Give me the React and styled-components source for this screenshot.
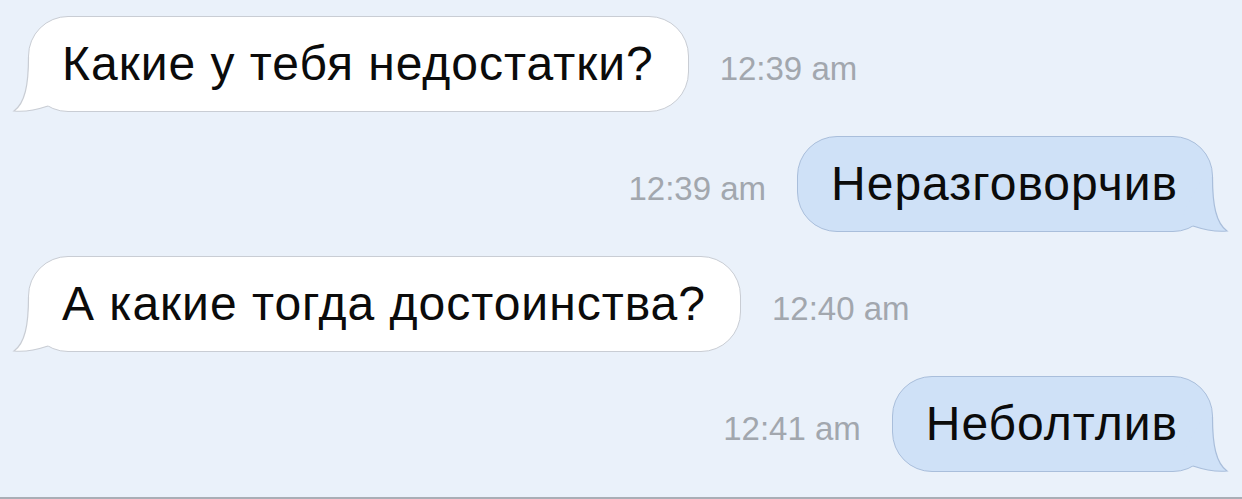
import React from "react";
import styled, { createGlobalStyle } from "styled-components";

const GlobalStyle = createGlobalStyle`
  html, body {
    margin: 0;
    padding: 0;
    background: #eaf1fa;
    font-family: "Liberation Sans", Arial, sans-serif;
  }
`;

const messages = [
  { text: "Какие у тебя недостатки?", time: "12:39 am", mine: false },
  { text: "Неразговорчив", time: "12:39 am", mine: true },
  { text: "А какие тогда достоинства?", time: "12:40 am", mine: false },
  { text: "Неболтлив", time: "12:41 am", mine: true },
];

const Screen = styled.div`
  height: 499px;
  box-sizing: border-box;
  display: flex;
  flex-direction: column;
  gap: 24px;
  padding: 16px 29px 0 28px;
  border-bottom: 2px solid #a9aeb6;
  overflow: hidden;
`;

const Row = styled.div`
  display: flex;
  align-items: center;
  gap: 31px;
  flex-direction: ${(p) => (p.mine ? "row-reverse" : "row")};
`;

const Bubble = styled.div`
  position: relative;
  height: 96px;
  box-sizing: border-box;
  display: flex;
  align-items: center;
  padding: 0 34px 2px 33px;
  border-radius: 40px;
  font-size: 48px;
  letter-spacing: 1px;
  color: #0b0b0b;
  background: ${(p) => (p.mine ? "#cfe1f7" : "#ffffff")};
  border: 1px solid ${(p) => (p.mine ? "#a9bedb" : "#c9cdd4")};
`;

const Tail = styled.svg`
  position: absolute;
  bottom: -2px;
  width: 60px;
  height: 60px;
  overflow: visible;
  ${(p) => (p.mine ? "right: -15px; transform: scaleX(-1);" : "left: -15px;")}
`;

const Time = styled.span`
  margin-top: 10px;
  font-size: 33px;
  font-weight: 300;
  color: #a2a7ae;
`;

function BubbleTail({ mine }) {
  const fill = mine ? "#cfe1f7" : "#ffffff";
  const stroke = mine ? "#a9bedb" : "#c9cdd4";
  return (
    <Tail mine={mine} viewBox="0 0 60 60">
      <path
        d="M14.5 4 C14.5 32, 11 50, 0 58 C10 59, 22 57, 34 53 L44 40 L24 4 Z"
        fill={fill}
      />
      <path
        d="M14.5 4 C14.5 32, 11 50, 0 58 C10 59, 22 57, 34 53"
        fill="none"
        stroke={stroke}
        strokeWidth="1.2"
      />
    </Tail>
  );
}

export default function App() {
  return (
    <>
      <GlobalStyle />
      <Screen>
        {messages.map((m, i) => (
          <Row key={i} mine={m.mine}>
            <Bubble mine={m.mine}>
              {m.text}
              <BubbleTail mine={m.mine} />
            </Bubble>
            <Time>{m.time}</Time>
          </Row>
        ))}
      </Screen>
    </>
  );
}
